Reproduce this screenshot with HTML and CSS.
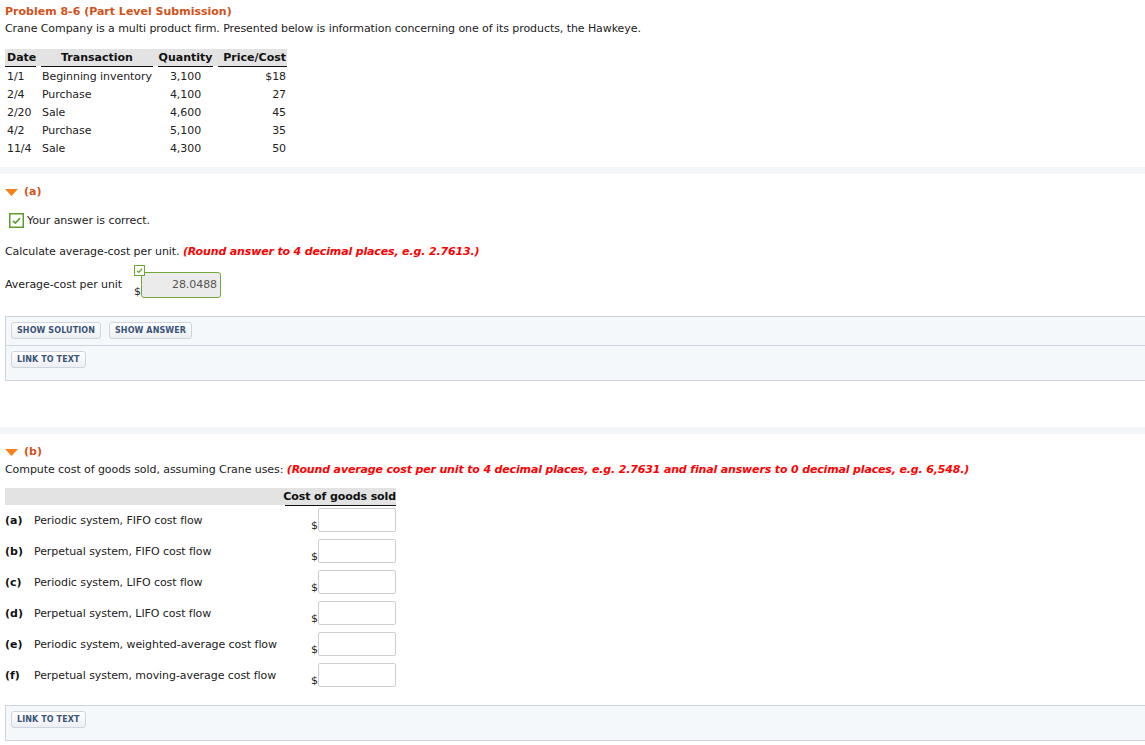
FILE: index.html
```html
<!DOCTYPE html>
<html lang="en">
<head>
<meta charset="utf-8">
<title>Problem 8-6</title>
<link rel="stylesheet" href="styles.css">
</head>
<body>
<div class="page">
  <h1 class="title">Problem 8-6 (Part Level Submission)</h1>
  <p class="intro">Crane Company is a multi product firm. Presented below is information concerning one of its products, the Hawkeye.</p>

  <div class="inv">
    <div class="inv-row inv-head">
      <span class="c-date">Date</span>
      <span class="c-trans c-center">Transaction</span>
      <span class="c-qty">Quantity</span>
      <span class="c-price">Price/Cost</span>
    </div>
    <div class="inv-row inv-rule"><span></span><span></span><span></span><span></span></div>
    <div class="inv-row"><span class="c-date">1/1</span><span class="c-trans">Beginning inventory</span><span class="c-qty">3,100</span><span class="c-price">$18</span></div>
    <div class="inv-row"><span class="c-date">2/4</span><span class="c-trans">Purchase</span><span class="c-qty">4,100</span><span class="c-price">27</span></div>
    <div class="inv-row"><span class="c-date">2/20</span><span class="c-trans">Sale</span><span class="c-qty">4,600</span><span class="c-price">45</span></div>
    <div class="inv-row"><span class="c-date">4/2</span><span class="c-trans">Purchase</span><span class="c-qty">5,100</span><span class="c-price">35</span></div>
    <div class="inv-row"><span class="c-date">11/4</span><span class="c-trans">Sale</span><span class="c-qty">4,300</span><span class="c-price">50</span></div>
  </div>

  <div class="band band-a"></div>

  <h2 class="part part-a">
    <svg class="tri" width="13" height="7" viewBox="0 0 13 7"><polygon points="0,0 13,0 6.5,7" fill="#f5821f"/></svg>
    <span>(a)</span>
  </h2>

  <div class="status">
    <svg class="okbox" width="15" height="15" viewBox="0 0 15 15"><rect x="0.75" y="0.75" width="13.5" height="13.5" fill="#fff" stroke="#5e9a2c" stroke-width="1.5"/><polyline points="4,7.8 6.4,10 11,5" fill="none" stroke="#5e9a2c" stroke-width="1.6"/></svg>
    <span>Your answer is correct.</span>
  </div>

  <p class="calc">Calculate average-cost per unit. <em class="hint">(Round answer to 4 decimal places, e.g. 2.7613.)</em></p>

  <div class="avg-row">
    <span class="avg-label">Average-cost per unit</span>
    <div class="answer">
      <svg class="okmini" width="11" height="11" viewBox="0 0 11 11"><rect x="0.5" y="0.5" width="10" height="10" fill="#fff" stroke="#6aa535" stroke-width="1"/><polyline points="3,5.8 4.8,7.4 8,3.8" fill="none" stroke="#6aa535" stroke-width="1.3"/></svg>
      <span class="dollar">$</span>
      <span class="field field-ok">28.0488</span>
    </div>
  </div>

  <div class="panel panel-a">
    <div class="panel-row panel-row-sep">
      <button class="btn">SHOW SOLUTION</button>
      <button class="btn">SHOW ANSWER</button>
    </div>
    <div class="panel-row">
      <button class="btn">LINK TO TEXT</button>
    </div>
  </div>

  <div class="band band-b"></div>

  <h2 class="part part-b">
    <svg class="tri" width="13" height="7" viewBox="0 0 13 7"><polygon points="0,0 13,0 6.5,7" fill="#f5821f"/></svg>
    <span>(b)</span>
  </h2>

  <p class="compute">Compute cost of goods sold, assuming Crane uses: <em class="hint">(Round average cost per unit to 4 decimal places, e.g. 2.7631 and final answers to 0 decimal places, e.g. 6,548.)</em></p>

  <div class="cogs">
    <div class="cogs-head"><span></span><span class="cogs-title">Cost of goods sold</span></div>
    <div class="cogs-rule"><span></span><span class="rule-line"></span></div>
    <div class="cogs-row"><span class="lbl"><b>(a)</b>Periodic system, FIFO cost flow</span><span class="cell"><span class="dollar">$</span><span class="field"></span></span></div>
    <div class="cogs-row"><span class="lbl"><b>(b)</b>Perpetual system, FIFO cost flow</span><span class="cell"><span class="dollar">$</span><span class="field"></span></span></div>
    <div class="cogs-row"><span class="lbl"><b>(c)</b>Periodic system, LIFO cost flow</span><span class="cell"><span class="dollar">$</span><span class="field"></span></span></div>
    <div class="cogs-row"><span class="lbl"><b>(d)</b>Perpetual system, LIFO cost flow</span><span class="cell"><span class="dollar">$</span><span class="field"></span></span></div>
    <div class="cogs-row"><span class="lbl"><b>(e)</b>Periodic system, weighted-average cost flow</span><span class="cell"><span class="dollar">$</span><span class="field"></span></span></div>
    <div class="cogs-row"><span class="lbl"><b>(f)</b>Perpetual system, moving-average cost flow</span><span class="cell"><span class="dollar">$</span><span class="field"></span></span></div>
  </div>

  <div class="panel panel-b">
    <div class="panel-row panel-row-last">
      <button class="btn">LINK TO TEXT</button>
    </div>
  </div>
</div>
</body>
</html>
```

FILE: styles.css
```css
html, body {
  margin: 0;
  padding: 0;
  background: #fff;
}
body {
  overflow: hidden;
}
.page {
  padding-left: 5px;
  font-family: "DejaVu Sans", Verdana, sans-serif;
  font-size: 11px;
  letter-spacing: -0.07px;
  color: #222;
  white-space: nowrap;
}
.title {
  margin: 5px 0 0;
  font-size: 11px;
  font-weight: bold;
  line-height: 14px;
  letter-spacing: 0;
  color: #d2521a;
}
.intro {
  margin: 3px 0 0;
  line-height: 14px;
}

/* inventory table */
.inv {
  margin-top: 13px;
  width: 282px;
}
.inv-row {
  display: grid;
  grid-template-columns: 31px 112px 55px 69px;
  column-gap: 5px;
  height: 18px;
  line-height: 18px;
}
.inv-head {
  height: 17px;
  line-height: 17px;
  background: #e3e3e3;
  font-weight: bold;
  color: #111;
  letter-spacing: 0;
}
.inv-rule {
  height: 1px;
  margin-bottom: 1px;
}
.inv-rule span {
  background: #111;
}
.c-date { padding-left: 2px; }
.c-trans { padding-left: 1px; }
.c-center { text-align: center; padding-left: 0; }
.c-qty { text-align: center; }
.c-price { text-align: right; padding-right: 1px; }

.band {
  height: 7px;
  margin-left: -5px;
  background: #f3f6f9;
}
.band-a { margin-top: 9px; }
.band-b { margin-top: 46px; }

.part {
  display: flex;
  align-items: center;
  gap: 6px;
  margin: 0;
  font-size: 11px;
  font-weight: bold;
  line-height: 16px;
  letter-spacing: 0;
  color: #d2521a;
}
.part-a { margin-top: 10px; }
.part-b { margin-top: 10px; }
.tri { display: block; }

.status {
  display: flex;
  align-items: center;
  gap: 3px;
  margin: 13px 0 0 4px;
  line-height: 15px;
}
.okbox { display: block; }

.calc {
  margin: 17px 0 0;
  line-height: 14px;
}
.hint {
  color: #ff0000;
  font-weight: bold;
  font-style: italic;
  letter-spacing: -0.15px;
}

.avg-row {
  display: flex;
  align-items: flex-start;
  margin-top: 6px;
}
.avg-label {
  width: 129px;
  margin-top: 13px;
  line-height: 14px;
}
.answer {
  position: relative;
  display: flex;
  align-items: flex-end;
  padding-top: 7px;
}
.okmini {
  position: absolute;
  top: 0;
  left: 0;
}
.dollar {
  width: 7px;
  line-height: 12px;
  font-size: 11px;
}
.field {
  display: block;
  box-sizing: border-box;
  width: 78px;
  height: 24px;
  border: 1px solid #cfcfcf;
  border-radius: 2px;
  background: #fff;
}
.field-ok {
  width: 80px;
  height: 26px;
  border: 1.5px solid #74a83c;
  border-radius: 3px;
  background: #ebebeb;
  color: #555;
  text-align: right;
  padding-right: 3px;
  line-height: 23px;
}

/* panels */
.panel {
  border: 1px solid #cdd4de;
  border-right: none;
  background: #f5f8fb;
}
.panel-a { margin-top: 18px; }
.panel-b { margin-top: 13px; }
.panel-row {
  display: flex;
  gap: 8px;
  padding: 5px 0 12px 5px;
}
.panel-row-sep {
  padding-bottom: 6px;
  border-bottom: 1px solid #cdd4de;
}
.panel-row-last {
  padding-bottom: 12px;
}
.btn {
  box-sizing: border-box;
  height: 17px;
  padding: 0 5px;
  border: 1px solid #cfd5dd;
  border-radius: 3px;
  background: linear-gradient(#ffffff, #eceff3);
  font-family: "DejaVu Sans", Verdana, sans-serif;
  font-size: 8px;
  font-weight: bold;
  line-height: 15px;
  letter-spacing: 0.1px;
  color: #3a5479;
}

.compute {
  margin: 3px 0 0;
  line-height: 14px;
}

/* cost of goods sold table */
.cogs {
  margin-top: 11px;
  width: 391px;
}
.cogs-head, .cogs-rule, .cogs-row {
  display: grid;
  grid-template-columns: 280px 111px;
}
.cogs-head {
  height: 17px;
  line-height: 17px;
  background: #e3e3e3;
}
.cogs-title {
  font-weight: bold;
  color: #111;
  text-align: right;
  letter-spacing: -0.1px;
  direction: rtl;
}
.cogs-rule {
  height: 1px;
}
.rule-line {
  background: #111;
}
.cogs-row {
  height: 31px;
  box-sizing: border-box;
  padding-top: 2px;
  align-items: start;
}
.lbl {
  padding-top: 1px;
  line-height: 24px;
}
.lbl b {
  display: inline-block;
  width: 29px;
  color: #111;
  letter-spacing: 0;
}
.cell {
  display: flex;
  justify-content: flex-end;
  align-items: flex-end;
}
```
